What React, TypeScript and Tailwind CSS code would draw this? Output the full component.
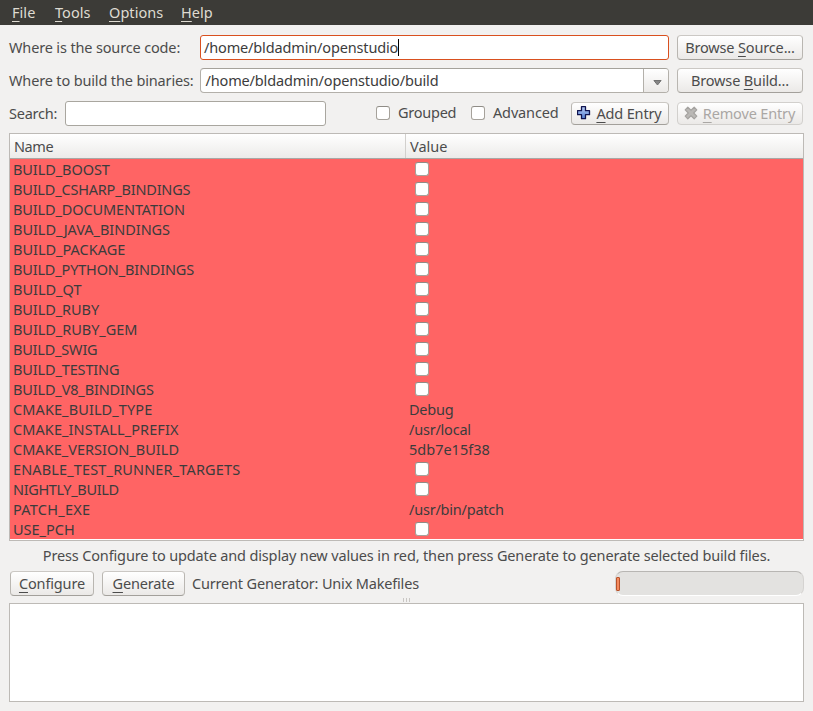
import React from "react";

type Entry = { name: string; value?: string; tracking?: string };

const entries: Entry[] = [
  { name: "BUILD_BOOST", tracking: "tracking-[-0.08px]" },
  { name: "BUILD_CSHARP_BINDINGS", tracking: "tracking-[-0.19px]" },
  { name: "BUILD_DOCUMENTATION", tracking: "tracking-[-0.12px]" },
  { name: "BUILD_JAVA_BINDINGS", tracking: "tracking-[-0.04px]" },
  { name: "BUILD_PACKAGE" },
  { name: "BUILD_PYTHON_BINDINGS", tracking: "tracking-[-0.17px]" },
  { name: "BUILD_QT" },
  { name: "BUILD_RUBY", tracking: "tracking-[-0.08px]" },
  { name: "BUILD_RUBY_GEM", tracking: "tracking-[-0.05px]" },
  { name: "BUILD_SWIG", tracking: "tracking-[-0.2px]" },
  { name: "BUILD_TESTING", tracking: "tracking-[-0.14px]" },
  { name: "BUILD_V8_BINDINGS", tracking: "tracking-[-0.15px]" },
  { name: "CMAKE_BUILD_TYPE", value: "Debug", tracking: "tracking-[0.1px]" },
  { name: "CMAKE_INSTALL_PREFIX", value: "/usr/local", tracking: "tracking-[0.09px]" },
  { name: "CMAKE_VERSION_BUILD", value: "5db7e15f38", tracking: "tracking-[0.02px]" },
  { name: "ENABLE_TEST_RUNNER_TARGETS", tracking: "tracking-[0.14px]" },
  { name: "NIGHTLY_BUILD", tracking: "tracking-[-0.35px]" },
  { name: "PATCH_EXE", value: "/usr/bin/patch", tracking: "tracking-[0.25px]" },
  { name: "USE_PCH" },
];

/* Label whose mnemonic letter carries a thin rule beneath it. */
function Mnemonic({ before = "", letter, after }: { before?: string; letter: string; after: string }) {
  return (
    <span className="whitespace-pre">
      {before}
      <span className="underline decoration-1 underline-offset-[3px] [text-decoration-skip-ink:none]">{letter}</span>
      {after}
    </span>
  );
}

function Checkbox() {
  return (
    <span className="block h-[14px] w-[14px] shrink-0 rounded-[3px] border border-[#a6a29b] border-t-[#8f8c86] bg-white" />
  );
}

function Button({ className, children }: { className: string; children: React.ReactNode }) {
  return (
    <button
      className={
        "flex shrink-0 items-center justify-center rounded-[4px] border bg-linear-to-b from-white to-[#ebe9e7] pb-[2px] " +
        className
      }
    >
      {children}
    </button>
  );
}

const edge = "border-[#b9b6b1] border-t-[#cbc8c4] border-b-[#a3a09b]";

export default function App() {
  return (
    <div className="flex h-[711px] w-[813px] flex-col overflow-hidden bg-[#f2f1f0] font-['Noto_Sans',sans-serif] text-[14.5px] leading-5 tracking-[-0.15px] text-[#4c4c4c]">
      <nav className="flex h-[25px] shrink-0 items-center bg-[#3c3b37] pb-[2px] pl-3 tracking-[0.05px] text-[#dfdbd2]">
        <span className="w-[43px]"><Mnemonic letter="F" after="ile" /></span>
        <span className="w-[54px]"><Mnemonic letter="T" after="ools" /></span>
        <span className="w-[72px]"><Mnemonic letter="O" after="ptions" /></span>
        <span><Mnemonic letter="H" after="elp" /></span>
      </nav>

      <div className="mt-[10px] flex h-[25px] shrink-0 items-center pl-[9px]">
        <span className="w-[191px] whitespace-nowrap pb-[2px]">Where is the source code:</span>
        <div className="flex h-[25px] w-[469px] items-center rounded-[3px] border border-[#d9501f] bg-white pl-[3px] text-[#3c3c3c]">
          <span className="pb-[2px]">/home/bldadmin/openstudio</span>
          <span className="h-[17px] w-px bg-black" />
        </div>
        <Button className={"ml-2 h-[25px] w-[126px] " + edge}>
          <Mnemonic before="Browse " letter="S" after="ource..." />
        </Button>
      </div>

      <div className="mt-2 flex h-[25px] shrink-0 items-center pl-[9px]">
        <span className="w-[191px] whitespace-nowrap pb-[2px]">Where to build the binaries:</span>
        <div className="flex h-[25px] w-[469px] overflow-hidden rounded-[4px] border border-[#b3b0aa] border-t-[#a5a29b] bg-white text-[#3c3c3c]">
          <span className="flex flex-1 items-center pb-[2px] pl-[4.5px]">/home/bldadmin/openstudio/build</span>
          <span className="flex w-[25px] items-center justify-center border-l border-[#b3b0aa] bg-linear-to-b from-white to-[#ebe9e7] pl-[2px] pt-[5px]">
            <svg width="9" height="6" viewBox="0 0 9 6"><path d="M.9.5h7.2L4.5 5Z" fill="#858585" stroke="#707070" /></svg>
          </span>
        </div>
        <Button className={"ml-2 h-[25px] w-[126px] " + edge}>
          <Mnemonic before="Browse " letter="B" after="uild..." />
        </Button>
      </div>

      <div className="mt-2 flex h-[25px] shrink-0 items-center pl-[9px]">
        <span className="w-[56px] pb-[2px] tracking-[-0.25px]">Search:</span>
        <div className="h-[25px] w-[261px] rounded-[3px] border border-[#a9a69f] bg-white" />
        <div className="ml-[50px] flex h-[25px] w-[95px] items-center gap-2 pb-[1px]">
          <Checkbox /><span className="pb-[2px] tracking-[-0.25px]">Grouped</span>
        </div>
        <div className="flex h-[25px] w-[100px] items-center gap-2 pb-[1px]">
          <Checkbox /><span className="pb-[2px]">Advanced</span>
        </div>
        <Button className={"h-[23px] w-[98px] gap-[5px] pr-[1px] " + edge}>
          <svg className="shrink-0" width="14" height="14" viewBox="0 0 14 14">
            <defs>
              <linearGradient id="plus" x1="0" y1="0" x2="0" y2="1">
                <stop offset="0" stopColor="#bcd0f6" />
                <stop offset="1" stopColor="#4f7ad0" />
              </linearGradient>
            </defs>
            <path d="M4.5.7h4v4h4v4h-4v4h-4v-4h-4v-4h4Z" fill="url(#plus)" stroke="#101450" strokeWidth="1.3" strokeLinejoin="round" />
          </svg>
          <Mnemonic letter="A" after="dd Entry" />
        </Button>
        <Button className="ml-2 h-[23px] w-[126px] gap-[5px] border-[#d2d0cd] pr-[1px] text-[#aaa7a4]">
          <svg className="shrink-0" width="14" height="14" viewBox="0 0 14 14">
            <path d="M3.8 1.2 7 4.2 10.2 1.2 12.8 3.8 9.7 7 12.8 10.2 10.2 12.8 7 9.8 3.8 12.8 1.2 10.2 4.3 7 1.2 3.8Z" fill="#bab8b5" stroke="#a5a3a0" strokeWidth="1.2" strokeLinejoin="round" />
          </svg>
          <Mnemonic letter="R" after="emove Entry" />
        </Button>
      </div>

      <div className="mx-[9px] mt-[7px] flex h-[408px] shrink-0 flex-col border border-[#bdbab6] bg-white">
        <div className="flex h-[25px] shrink-0 items-center border-b border-[#a9a7a4] bg-linear-to-b from-white to-[#ecebe9]">
          <span className="flex h-full w-[396px] items-center border-r border-[#d2d0cd] pl-1 tracking-[-0.4px]">Name</span>
          <span className="pl-1 tracking-normal">Value</span>
        </div>
        <div className="flex flex-col bg-[#ff6464] text-[#3c3c3c]">
          {entries.map((e) => (
            <div key={e.name} className="flex h-5 items-center">
              <span className={"w-[399px] pl-[3px] " + (e.tracking ?? "tracking-normal")}>{e.name}</span>
              {e.value ? (
                <span className={e.value.startsWith("5") ? "tracking-normal" : "tracking-[-0.22px]"}>{e.value}</span>
              ) : (
                <span className="pl-[6px]"><Checkbox /></span>
              )}
            </div>
          ))}
        </div>
      </div>

      <p className="mt-1 h-5 shrink-0 whitespace-nowrap text-center">
        Press Configure to update and display new values in red, then press Generate to generate selected build files.
      </p>

      <div className="mt-[6px] flex h-[25px] shrink-0 items-center pl-[10px]">
        <Button className={"h-[25px] w-[84px] " + edge}><Mnemonic letter="C" after="onfigure" /></Button>
        <Button className={"ml-2 h-[25px] w-[83px] " + edge}><Mnemonic letter="G" after="enerate" /></Button>
        <span className="ml-[7px] w-[423px] pb-[2px] tracking-[-0.18px]">Current Generator: Unix Makefiles</span>
        <div className="flex h-[25px] w-[189px] items-center rounded-[8px] border border-[#d5d3d1] border-t-[#b8b6b3] border-b-white bg-[#e3e2e0] pt-[1px]">
          <span className="h-[14px] w-1 rounded-[1px] border border-[#b9532c] bg-[#f58b5f]" />
        </div>
      </div>

      <div className="flex h-[7px] shrink-0 items-center justify-center gap-[2px] pt-[1px]">
        <span className="h-1 w-px bg-[#c9c6c3]" />
        <span className="h-1 w-px bg-[#c9c6c3]" />
        <span className="h-1 w-px bg-[#c9c6c3]" />
      </div>
      <div className="mx-[9px] h-[99px] shrink-0 border border-[#bdbab6] bg-white" />
    </div>
  );
}
